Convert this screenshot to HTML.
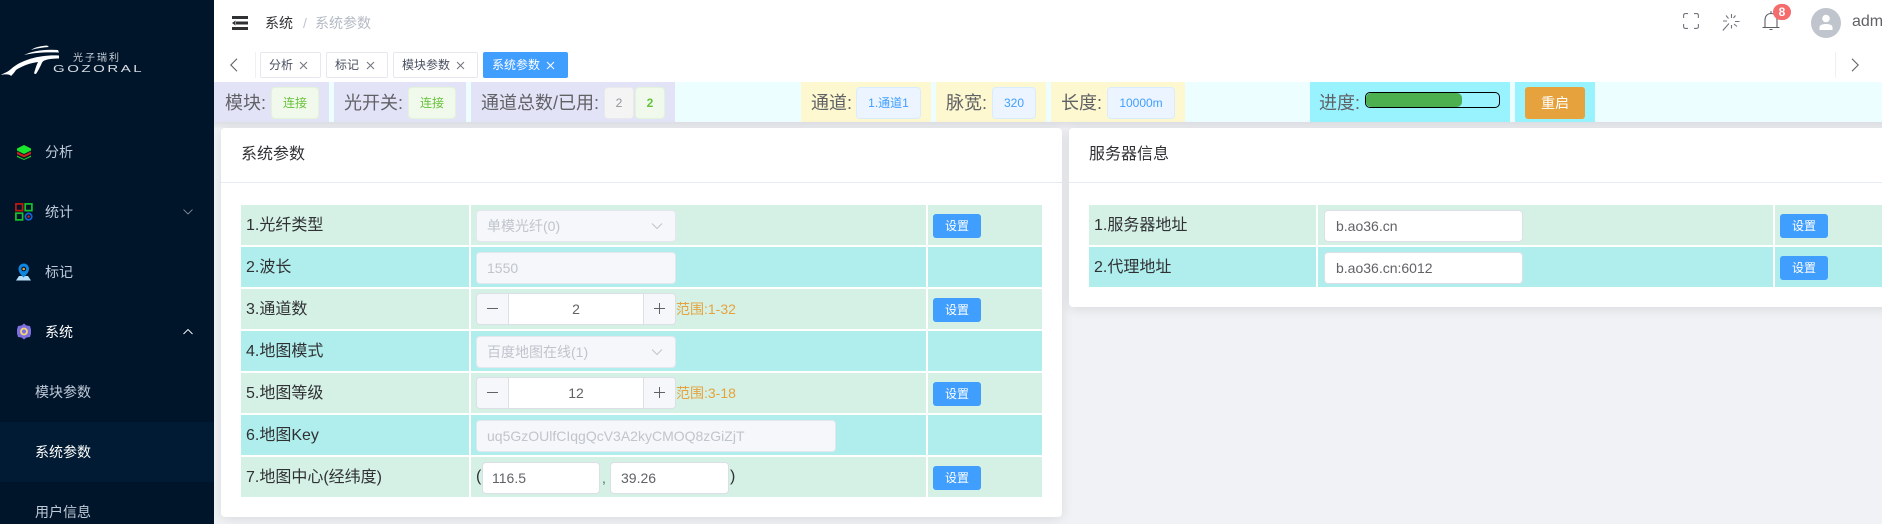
<!DOCTYPE html>
<html lang="zh">
<head>
<meta charset="utf-8">
<title>系统参数</title>
<style>
*{box-sizing:border-box}
html,body{margin:0;padding:0;width:1882px;height:524px;overflow:hidden;background:#f0f2f5}
body{position:relative;font-family:"Liberation Sans","Noto Sans CJK SC",sans-serif;font-size:14px;color:#606266}
.a{position:absolute;white-space:nowrap}
.side{left:0;top:0;width:214px;height:524px;background:#00142a}
.mi{left:45px;width:100px;height:20px;line-height:20px;font-size:14px;color:#bfcbd9}
.sub{left:35px;height:20px;line-height:20px;font-size:14px;color:#bfcbd9}
.tab{top:52px;height:26px;line-height:25px;background:#fff;border:1px solid #e6e8f0;border-radius:2px;font-size:12px;color:#495060;padding-left:8px}
.tab svg{position:absolute;top:8px}
.seg{top:82px;height:40px}
.lb{top:82px;height:40px;line-height:43px;font-size:18px;color:#606266}
.tag{top:87px;height:32px;line-height:30px;border-radius:4px;font-size:12px;text-align:center;border:1px solid}
.g{background:#f0f9eb;border-color:#e1f3d8;color:#67c23a}
.b{background:#ecf5ff;border-color:#d9ecff;color:#409eff}
.n{background:#f4f4f5;border-color:#e9e9eb;color:#909399}
.card{background:#fff;border-radius:4px;box-shadow:0 2px 12px rgba(0,0,0,.1)}
.ct{height:24px;line-height:24px;font-size:16px;color:#303133}
.hl{height:1px;background:#e6ebf5}
.r1{background:#d5f1e6}
.r2{background:#b0eeee}
.c{height:40px}
.t{height:40px;line-height:42px;font-size:16px;color:#303133}
.in{height:32px;line-height:31px;border:1px solid #dcdfe6;border-radius:4px;background:#fff;font-size:14px;color:#606266;padding-left:10px}
.dis{background:#f5f7fa;border-color:#e4e7ed;color:#c0c4cc}
.num{left:476px;width:200px;height:32px;background:#fff;border:1px solid #dcdfe6;border-radius:4px;overflow:hidden;text-align:center;line-height:30px;color:#606266}
.num i{position:absolute;top:0;width:32px;height:30px;background:#f5f7fa}
.num i.m{left:0;border-right:1px solid #dcdfe6}
.num i.p{right:0;border-left:1px solid #dcdfe6}
.num i::before{content:"";position:absolute;left:10px;top:14px;width:11px;height:1px;background:#606266}
.num i.p::after{content:"";position:absolute;left:15px;top:9px;width:1px;height:11px;background:#606266}
.rg{left:676px;height:20px;line-height:20px;font-size:14px;color:#e6a23c}
.btn{width:48px;height:24px;line-height:24px;background:#409eff;border-radius:3px;color:#fff;font-size:12px;text-align:center}
</style>
</head>
<body>

<!-- sidebar -->
<div class="a side"></div>
<svg class="a" style="left:0;top:40px" width="145" height="45" viewBox="0 40 145 45">
<g fill="#fff">
<path d="M31 50C35 47 41 46 47 45.500L49 47C43 47.500 37 48 31 50Z"/>
<path d="M24 55C32 51 45 49 58 50L59 52.500C46 52 34 52.500 24 55Z"/>
<path d="M1 75C4 73 8 72 11 69C22 59 42 54.500 59 55.500L59 58.500C54 58.500 48 59 46 60C42 61 42 63 41 65C39 69 38 71 36 74L34 73.500C35 70 36 66 38 62C30 63 22 66 16 70C14 73 12 75 11 76C10 74 5 74 1 75Z"/>
</g>
</svg>
<div class="a" style="left:73px;top:53px;height:11px;line-height:11px;font-size:10px;letter-spacing:2px;color:#c9ced6">光子瑞利</div>
<div class="a" style="left:53px;top:65px;height:10px;line-height:10px;font-size:10px;letter-spacing:1.700px;color:#d8dce2;transform:scaleX(1.5);transform-origin:left center">GOZORAL</div>

<!-- layers icon -->
<svg class="a" style="left:16px;top:144px" width="16" height="16" viewBox="0 0 16 16">
<path d="M1 11.500L8 15L15 11.500V13L8 16L1 13Z" fill="#19d229"/>
<path d="M1 7.500L8 11L15 7.500V10L8 13.500L1 10Z" fill="#c8201c"/>
<path d="M8 1L15 4.500V6.500L8 10L1 6.500V4.500Z" fill="#19e62c"/>
</svg>
<div class="a mi" style="top:142px">分析</div>

<!-- grid icon -->
<svg class="a" style="left:15px;top:203px" width="18" height="18" viewBox="0 0 18 18" fill="none" stroke-width="1.700">
<rect x=".9" y=".9" width="6.700" height="6.700" stroke="#c4170f"/>
<rect x="10.200" y=".9" width="6.700" height="6.700" stroke="#17c22a"/>
<rect x=".9" y="10.200" width="6.700" height="6.700" stroke="#17c22a"/>
<circle cx="13.600" cy="13.600" r="3.200" stroke="#1466d8"/>
<circle cx="13.600" cy="13.600" r="1.200" fill="#d02418" stroke="none"/>
</svg>
<div class="a mi" style="top:202px">统计</div>
<svg class="a" style="left:183px;top:208px" width="10" height="8" viewBox="0 0 10 8" fill="none"><path d="M.5 1.500L5 6L9.500 1.500" stroke="#8f9aa8" stroke-width=".8"/></svg>

<!-- marker icon -->
<svg class="a" style="left:16px;top:263px" width="16" height="18" viewBox="0 0 16 18">
<path d="M3 13L0 17.500H15L12 13Z" fill="#b7e0f8"/>
<path d="M8 .5C4.500 .5 2.500 3 2.500 6C2.500 9.500 6 13 7.500 14.500C9 13 13 9.500 13 6C13 3 11 .5 8 .5Z" fill="#0f86e0"/>
<circle cx="7.700" cy="6" r="2.400" fill="#00142a"/>
<circle cx="7.700" cy="6" r="1.300" fill="#f0a030"/>
</svg>
<div class="a mi" style="top:262px">标记</div>

<!-- system icon -->
<svg class="a" style="left:16px;top:323px" width="16" height="17" viewBox="0 0 16 17">
<path d="M8 .5L10.500 2.500L14 3L15 6.500L15 10.500L14 14L10.500 14.500L8 16.500L5.500 14.500L2 14L1 10.500L1 6.500L2 3L5.500 2.500Z" fill="#7f70e0"/>
<circle cx="8" cy="8.500" r="3" fill="none" stroke="#f2d873" stroke-width="1.800"/>
</svg>
<div class="a mi" style="top:322px;color:#fff">系统</div>
<svg class="a" style="left:183px;top:328px" width="10" height="8" viewBox="0 0 10 8" fill="none"><path d="M.5 6L5 1.500L9.500 6" stroke="#fff" stroke-width=".9"/></svg>

<div class="a sub" style="top:382px">模块参数</div>
<div class="a" style="left:0;top:422px;width:214px;height:60px;background:#001b33"></div>
<div class="a sub" style="top:442px;color:#fff">系统参数</div>
<div class="a sub" style="top:502px">用户信息</div>

<!-- header -->
<div class="a" style="left:214px;top:0;width:1668px;height:82px;background:#fff"></div>
<svg class="a" style="left:232px;top:16px" width="16" height="14" viewBox="0 0 16 14">
<rect x="0" y="0" width="16" height="3" fill="#303133"/>
<rect x="4" y="5.500" width="12" height="3" fill="#303133"/>
<rect x="0" y="11" width="16" height="3" fill="#303133"/>
<path d="M0 7L3.500 4.500V9.500Z" fill="#303133"/>
</svg>
<div class="a" style="left:265px;top:13px;height:20px;line-height:20px;font-size:14px;color:#303133">系统</div>
<div class="a" style="left:303px;top:13px;height:20px;line-height:20px;font-size:14px;color:#c0c4cc">/</div>
<div class="a" style="left:315px;top:13px;height:20px;line-height:20px;font-size:14px;color:#b4bac4">系统参数</div>

<!-- header right icons -->
<svg class="a" style="left:1683px;top:13px" width="16" height="16" viewBox="0 0 16 16" fill="none" stroke="#71757c" stroke-width="1.100">
<path d="M.6 5V2.500Q.6 .6 2.500 .6H5M11 .6H13.500Q15.400 .6 15.400 2.500V5M15.400 11V13.500Q15.400 15.400 13.500 15.400H11M5 15.400H2.500Q.6 15.400 .6 13.500V11"/>
</svg>
<svg class="a" style="left:1722px;top:13px" width="18" height="18" viewBox="0 0 18 18" fill="none" stroke="#71757c" stroke-width="1.100">
<path d="M9.500 1V5M4 2.500L6.500 5.500M13.500 2.500L11.500 5M1 8H5M13 8.500H17.500M12 11L15 13.500M9.500 12V15.500M7 10.500L.8 17.500"/>
</svg>
<svg class="a" style="left:1762px;top:11px" width="18" height="20" viewBox="0 0 18 20" fill="none" stroke="#5a5e66" stroke-width="1.100">
<path d="M3 16V9C3 5 5.500 2.500 9 2.500C12.500 2.500 15 5 15 9V16M.5 16.500H17.500"/>
<path d="M8 1H10M7.500 18.500H10.500"/>
</svg>
<div class="a" style="left:1773px;top:4px;width:18px;height:16px;line-height:16px;border-radius:8px;background:#f56c6c;color:#fff;font-size:12px;font-weight:bold;text-align:center">8</div>
<div class="a" style="left:1811px;top:8px;width:30px;height:30px;border-radius:50%;background:#c0c4cc"></div>
<svg class="a" style="left:1818px;top:14px" width="16" height="17" viewBox="0 0 16 17" fill="#fff"><circle cx="8" cy="4.500" r="3.800"/><path d="M1.500 16V13.500C1.500 11 4 10 8 10C12 10 14.500 11 14.500 13.500V16Z"/></svg>
<div class="a" style="left:1852px;top:12px;height:20px;line-height:20px;font-size:16px;color:#606266">admin</div>

<!-- tabs -->
<svg class="a" style="left:229px;top:58px" width="10" height="14" viewBox="0 0 10 14" fill="none"><path d="M8 .7L1.800 7L8 13.300" stroke="#606266" stroke-width="1.100"/></svg>
<div class="a" style="left:255px;top:52px;width:1px;height:26px;background:#f0f0f2"></div>
<div class="a tab" style="left:260px;width:61px">分析<svg style="left:38px" width="9" height="9" viewBox="0 0 9 9"><path d="M1 1L8 8M8 1L1 8" stroke="#70747b"/></svg></div>
<div class="a tab" style="left:326px;width:62px">标记<svg style="left:39px" width="9" height="9" viewBox="0 0 9 9"><path d="M1 1L8 8M8 1L1 8" stroke="#70747b"/></svg></div>
<div class="a tab" style="left:393px;width:85px">模块参数<svg style="left:62px" width="9" height="9" viewBox="0 0 9 9"><path d="M1 1L8 8M8 1L1 8" stroke="#70747b"/></svg></div>
<div class="a tab" style="left:483px;width:85px;background:#409eff;border-color:#409eff;color:#fff">系统参数<svg style="left:62px" width="9" height="9" viewBox="0 0 9 9"><path d="M1 1L8 8M8 1L1 8" stroke="#fff"/></svg></div>
<div class="a" style="left:1835px;top:52px;width:1px;height:26px;background:#f0f0f2"></div>
<svg class="a" style="left:1850px;top:58px" width="10" height="14" viewBox="0 0 10 14" fill="none"><path d="M2 .7L8.200 7L2 13.300" stroke="#606266" stroke-width="1.100"/></svg>

<!-- status bar -->
<div class="a seg" style="left:214px;width:1668px;background:#ecfeff"></div>
<div class="a" style="left:214px;top:122px;width:1668px;height:6px;background:linear-gradient(#dfe0e5,#eceef1)"></div>
<div class="a seg" style="left:214px;width:115px;background:#e3e3f8"></div>
<div class="a seg" style="left:334px;width:132px;background:#e3e3f8"></div>
<div class="a seg" style="left:471px;width:204px;background:#e3e3f8"></div>
<div class="a seg" style="left:801px;width:130px;background:#fdf8cf"></div>
<div class="a seg" style="left:936px;width:110px;background:#fdf8cf"></div>
<div class="a seg" style="left:1051px;width:134px;background:#fdf8cf"></div>
<div class="a seg" style="left:1310px;width:200px;background:#99f3ff"></div>
<div class="a seg" style="left:1515px;width:80px;background:#99f3ff"></div>

<div class="a lb" style="left:225px">模块:</div>
<div class="a tag g" style="left:271px;width:48px">连接</div>
<div class="a lb" style="left:344px">光开关:</div>
<div class="a tag g" style="left:408px;width:48px">连接</div>
<div class="a lb" style="left:481px">通道总数/已用:</div>
<div class="a tag n" style="left:604px;width:30px">2</div>
<div class="a tag g" style="left:635px;width:30px;font-weight:bold">2</div>
<div class="a lb" style="left:811px">通道:</div>
<div class="a tag b" style="left:856px;width:65px">1.通道1</div>
<div class="a lb" style="left:946px">脉宽:</div>
<div class="a tag b" style="left:992px;width:44px">320</div>
<div class="a lb" style="left:1061px">长度:</div>
<div class="a tag b" style="left:1107px;width:68px">10000m</div>
<div class="a lb" style="left:1319px">进度:</div>
<div class="a" style="left:1365px;top:92px;width:135px;height:16px;border:1px solid #000;border-radius:5px;overflow:hidden"><div style="width:72%;height:100%;background:#4caf50;border-radius:5px"></div></div>
<div class="a" style="left:1525px;top:87px;width:60px;height:32px;line-height:32px;background:#e6a23c;border-radius:3px;color:#fff;font-size:14px;text-align:center">重启</div>

<!-- card 1 -->
<div class="a card" style="left:221px;top:128px;width:841px;height:389px"></div>
<div class="a ct" style="left:241px;top:143px">系统参数</div>
<div class="a hl" style="left:221px;top:182px;width:841px"></div>

<div class="a c r1" style="left:241px;top:205px;width:228px"></div><div class="a c r1" style="left:471px;top:205px;width:455px"></div><div class="a c r1" style="left:928px;top:205px;width:114px"></div>
<div class="a c r2" style="left:241px;top:247px;width:228px"></div><div class="a c r2" style="left:471px;top:247px;width:455px"></div><div class="a c r2" style="left:928px;top:247px;width:114px"></div>
<div class="a c r1" style="left:241px;top:289px;width:228px"></div><div class="a c r1" style="left:471px;top:289px;width:455px"></div><div class="a c r1" style="left:928px;top:289px;width:114px"></div>
<div class="a c r2" style="left:241px;top:331px;width:228px"></div><div class="a c r2" style="left:471px;top:331px;width:455px"></div><div class="a c r2" style="left:928px;top:331px;width:114px"></div>
<div class="a c r1" style="left:241px;top:373px;width:228px"></div><div class="a c r1" style="left:471px;top:373px;width:455px"></div><div class="a c r1" style="left:928px;top:373px;width:114px"></div>
<div class="a c r2" style="left:241px;top:415px;width:228px"></div><div class="a c r2" style="left:471px;top:415px;width:455px"></div><div class="a c r2" style="left:928px;top:415px;width:114px"></div>
<div class="a c r1" style="left:241px;top:457px;width:228px"></div><div class="a c r1" style="left:471px;top:457px;width:455px"></div><div class="a c r1" style="left:928px;top:457px;width:114px"></div>

<div class="a t" style="left:246px;top:205px">1.光纤类型</div>
<div class="a t" style="left:246px;top:247px">2.波长</div>
<div class="a t" style="left:246px;top:289px">3.通道数</div>
<div class="a t" style="left:246px;top:331px">4.地图模式</div>
<div class="a t" style="left:246px;top:373px">5.地图等级</div>
<div class="a t" style="left:246px;top:415px">6.地图Key</div>
<div class="a t" style="left:246px;top:457px">7.地图中心(经纬度)</div>

<div class="a in dis" style="left:476px;top:210px;width:200px">单模光纤(0)</div>
<svg class="a" style="left:651px;top:222px" width="12" height="8" viewBox="0 0 12 8" fill="none"><path d="M1 1.500L6 6.500L11 1.500" stroke="#c0c4cc"/></svg>
<div class="a in dis" style="left:476px;top:252px;width:200px">1550</div>
<div class="a num" style="top:293px"><i class="m"></i>2<i class="p"></i></div>
<div class="a rg" style="top:299px">范围:1-32</div>
<div class="a in dis" style="left:476px;top:336px;width:200px">百度地图在线(1)</div>
<svg class="a" style="left:651px;top:348px" width="12" height="8" viewBox="0 0 12 8" fill="none"><path d="M1 1.500L6 6.500L11 1.500" stroke="#c0c4cc"/></svg>
<div class="a num" style="top:377px"><i class="m"></i>12<i class="p"></i></div>
<div class="a rg" style="top:383px">范围:3-18</div>
<div class="a in dis" style="left:476px;top:420px;width:360px">uq5GzOUlfCIqgQcV3A2kyCMOQ8zGiZjT</div>
<div class="a" style="left:476px;top:467px;height:20px;line-height:20px;font-size:16px;color:#303133">(</div>
<div class="a in" style="left:482px;top:462px;width:118px;padding-left:9px">116.5</div>
<div class="a" style="left:602px;top:468px;height:20px;line-height:20px;font-size:14px;color:#606266">,</div>
<div class="a in" style="left:610px;top:462px;width:119px">39.26</div>
<div class="a" style="left:730px;top:467px;height:20px;line-height:20px;font-size:16px;color:#303133">)</div>

<div class="a btn" style="left:933px;top:214px">设置</div>
<div class="a btn" style="left:933px;top:298px">设置</div>
<div class="a btn" style="left:933px;top:382px">设置</div>
<div class="a btn" style="left:933px;top:466px">设置</div>

<!-- card 2 -->
<div class="a card" style="left:1069px;top:128px;width:830px;height:179px"></div>
<div class="a ct" style="left:1089px;top:143px">服务器信息</div>
<div class="a hl" style="left:1069px;top:182px;width:813px"></div>

<div class="a c r1" style="left:1089px;top:205px;width:227px"></div><div class="a c r1" style="left:1318px;top:205px;width:455px"></div><div class="a c r1" style="left:1775px;top:205px;width:107px"></div>
<div class="a c r2" style="left:1089px;top:247px;width:227px"></div><div class="a c r2" style="left:1318px;top:247px;width:455px"></div><div class="a c r2" style="left:1775px;top:247px;width:107px"></div>
<div class="a t" style="left:1094px;top:205px">1.服务器地址</div>
<div class="a t" style="left:1094px;top:247px">2.代理地址</div>
<div class="a in" style="left:1324px;top:210px;width:199px;padding-left:11px">b.ao36.cn</div>
<div class="a in" style="left:1324px;top:252px;width:199px;padding-left:11px">b.ao36.cn:6012</div>
<div class="a btn" style="left:1780px;top:214px">设置</div>
<div class="a btn" style="left:1780px;top:256px">设置</div>
</body>
</html>
